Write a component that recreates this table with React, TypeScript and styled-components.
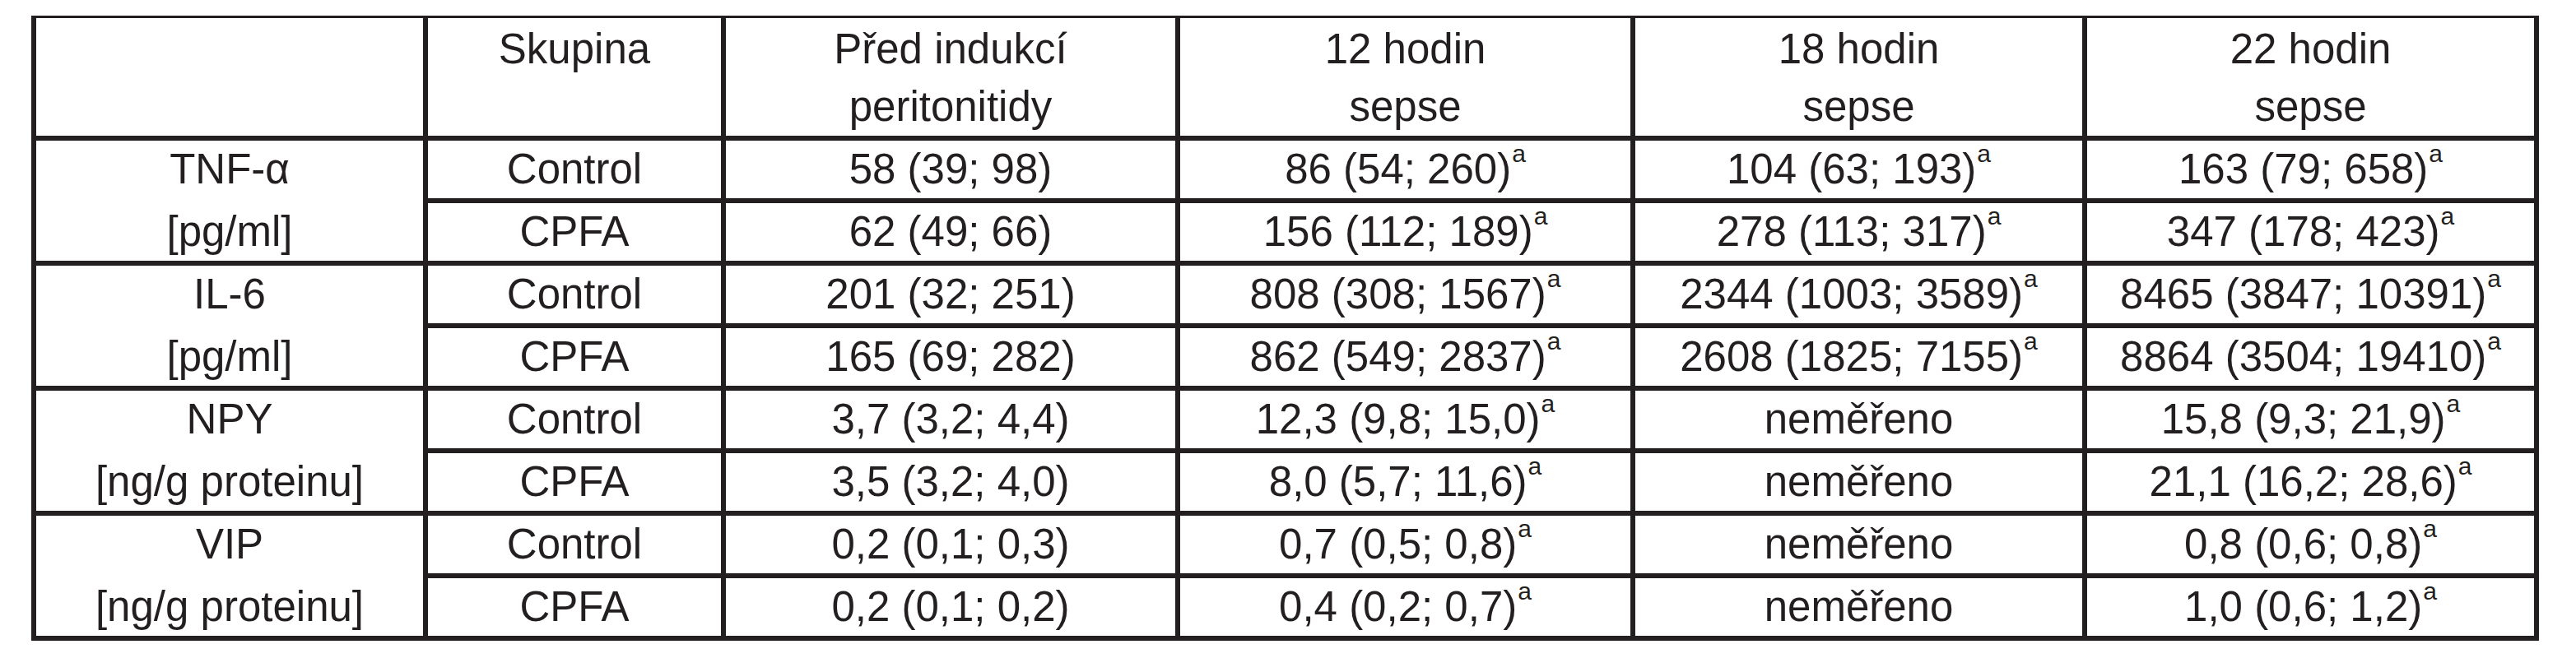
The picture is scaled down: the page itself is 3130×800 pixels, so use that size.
import React from 'react';
import styled, { createGlobalStyle } from 'styled-components';

type Row = {
  group: string;
  values: string[];
  marked: boolean[];
};

type Block = {
  name: string;
  unit: string;
  rows: Row[];
};

const headers = [
  '',
  'Skupina',
  'Před indukcí\nperitonitidy',
  '12 hodin\nsepse',
  '18 hodin\nsepse',
  '22 hodin\nsepse',
];

const blocks: Block[] = [
  {
    name: 'TNF-α',
    unit: '[pg/ml]',
    rows: [
      {
        group: 'Control',
        values: ['58 (39; 98)', '86 (54; 260)', '104 (63; 193)', '163 (79; 658)'],
        marked: [false, true, true, true],
      },
      {
        group: 'CPFA',
        values: ['62 (49; 66)', '156 (112; 189)', '278 (113; 317)', '347 (178; 423)'],
        marked: [false, true, true, true],
      },
    ],
  },
  {
    name: 'IL-6',
    unit: '[pg/ml]',
    rows: [
      {
        group: 'Control',
        values: ['201 (32; 251)', '808 (308; 1567)', '2344 (1003; 3589)', '8465 (3847; 10391)'],
        marked: [false, true, true, true],
      },
      {
        group: 'CPFA',
        values: ['165 (69; 282)', '862 (549; 2837)', '2608 (1825; 7155)', '8864 (3504; 19410)'],
        marked: [false, true, true, true],
      },
    ],
  },
  {
    name: 'NPY',
    unit: '[ng/g proteinu]',
    rows: [
      {
        group: 'Control',
        values: ['3,7 (3,2; 4,4)', '12,3 (9,8; 15,0)', 'neměřeno', '15,8 (9,3; 21,9)'],
        marked: [false, true, false, true],
      },
      {
        group: 'CPFA',
        values: ['3,5 (3,2; 4,0)', '8,0 (5,7; 11,6)', 'neměřeno', '21,1 (16,2; 28,6)'],
        marked: [false, true, false, true],
      },
    ],
  },
  {
    name: 'VIP',
    unit: '[ng/g proteinu]',
    rows: [
      {
        group: 'Control',
        values: ['0,2 (0,1; 0,3)', '0,7 (0,5; 0,8)', 'neměřeno', '0,8 (0,6; 0,8)'],
        marked: [false, true, false, true],
      },
      {
        group: 'CPFA',
        values: ['0,2 (0,1; 0,2)', '0,4 (0,2; 0,7)', 'neměřeno', '1,0 (0,6; 1,2)'],
        marked: [false, true, false, true],
      },
    ],
  },
];

const App = (): JSX.Element => {
  return (
    <>
      <GlobalStyle />
      <Grid>
        {headers.map((h, i) => (
          <HeadCell key={i}>{h}</HeadCell>
        ))}
        {blocks.map((block) => (
          <React.Fragment key={block.name}>
            <LabelCell>
              <LabelLine>{block.name}</LabelLine>
              <LabelLine>{block.unit}</LabelLine>
            </LabelCell>
            {block.rows.map((row) => (
              <React.Fragment key={row.group}>
                <Cell>{row.group}</Cell>
                {row.values.map((v, i) => (
                  <Cell key={i}>
                    {v}
                    {row.marked[i] && <Mark>a</Mark>}
                  </Cell>
                ))}
              </React.Fragment>
            ))}
          </React.Fragment>
        ))}
      </Grid>
    </>
  );
};

const GlobalStyle = createGlobalStyle`
  html, body {
    margin: 0;
    padding: 0;
    background: #ffffff;
  }
  body {
    font-family: "Liberation Sans", Arial, sans-serif;
    color: #231f20;
  }
`;

const Grid = styled.div`
  display: grid;
  width: 3047px;
  box-sizing: border-box;
  margin: 19px 0 0 38px;
  padding: 6px;
  gap: 6px;
  background: #231f20;
  grid-template-columns: 470px 356px 546px 547px 543px 543px;
  grid-template-rows: 140px repeat(8, 70px);
  font-size: 51px;
`;

const HeadCell = styled.div`
  background: #ffffff;
  text-align: center;
  line-height: 70px;
  white-space: pre-line;
  margin-top: -3px;
  padding-top: 3px;
`;

const Cell = styled.div`
  background: #ffffff;
  display: flex;
  align-items: center;
  justify-content: center;
  line-height: 70px;
  white-space: nowrap;
`;

const LabelCell = styled.div`
  grid-row: span 2;
  background: #ffffff;
  display: flex;
  flex-direction: column;
  justify-content: space-between;
`;

const LabelLine = styled.div`
  height: 70px;
  line-height: 70px;
  text-align: center;
`;

const Mark = styled.span`
  font-size: 30px;
  line-height: 0;
  align-self: flex-start;
  margin-top: 16px;
  margin-left: 1px;
`;

export default App;
